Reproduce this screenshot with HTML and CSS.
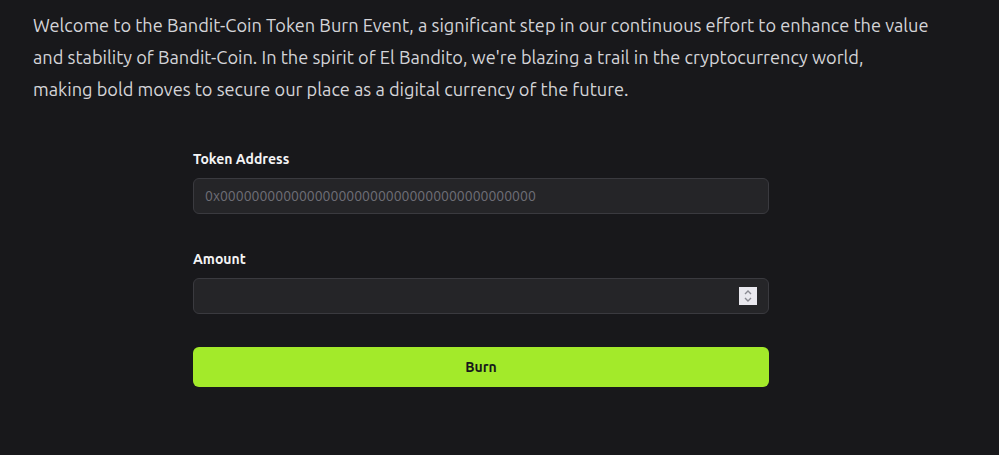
FILE: index.html
```html
<!DOCTYPE html>
<html>
<head>
<meta charset="utf-8">
<link rel="stylesheet" href="styles.css">
</head>
<body>
<main class="page">
  <p class="intro">Welcome to the Bandit-Coin Token Burn Event, a significant step in our continuous effort to enhance the value and stability of Bandit-Coin. In the spirit of El Bandito, we're blazing a trail in the cryptocurrency world,<br>making bold moves to secure our place as a digital currency of the future.</p>
  <form class="form">
    <div class="field">
      <label class="label" for="addr">Token Address</label>
      <input class="input" id="addr" type="text" placeholder="0x0000000000000000000000000000000000000000">
    </div>
    <div class="field">
      <label class="label" for="amt">Amount</label>
      <div class="num-wrap">
        <input class="input" id="amt" type="number">
        <span class="spin"><svg width="12" height="14" viewBox="0 0 12 14"><path d="M3 5 L6 2 L9 5 M3 9 L6 12 L9 9" fill="none" stroke="#8a8a92" stroke-width="1.4"/></svg></span>
      </div>
    </div>
    <button class="btn" type="button">Burn</button>
  </form>
</main>
</body>
</html>
```
FILE: styles.css
```css
html, body {
  margin: 0;
  padding: 0;
  background: #18181b;
}
body {
  font-family: "Ubuntu", "Noto Sans", "Open Sans", sans-serif;
  color: #d4d4d8;
}
.page {
  width: 896px;
  padding: 9px 0 0 33px;
  box-sizing: content-box;
}
.intro {
  margin: 0;
  max-width: 896px;
  font-size: 18.2px;
  line-height: 32px;
}
.form {
  width: 576px;
  margin: 44px auto 0;
  display: flex;
  flex-direction: column;
}
.field {
  display: flex;
  flex-direction: column;
  margin-bottom: 35px;
}
.label {
  font-size: 14px;
  font-weight: 700;
  color: #f4f4f5;
  line-height: 20px;
  margin-bottom: 9px;
}
.input {
  box-sizing: border-box;
  width: 100%;
  height: 36px;
  background: #252528;
  border: 1px solid #3a3a3f;
  border-radius: 6px;
  padding: 0 11px;
  font-family: inherit;
  font-size: 14px;
  color: #e4e4e7;
  outline: none;
}
.input::placeholder {
  color: #6e6e76;
}
.num-wrap {
  position: relative;
}
.input[type=number]::-webkit-inner-spin-button,
.input[type=number]::-webkit-outer-spin-button {
  -webkit-appearance: none;
  margin: 0;
}
.spin {
  position: absolute;
  right: 12px;
  top: 9px;
  width: 18px;
  height: 18px;
  background: #e9e8ee;
  display: flex;
  align-items: center;
  justify-content: center;
}
.btn {
  height: 40px;
  border: 0;
  border-radius: 6px;
  background: #a3ea2a;
  color: #18181b;
  font-family: inherit;
  font-size: 14px;
  font-weight: 700;
  margin-top: -2px;
}
```
